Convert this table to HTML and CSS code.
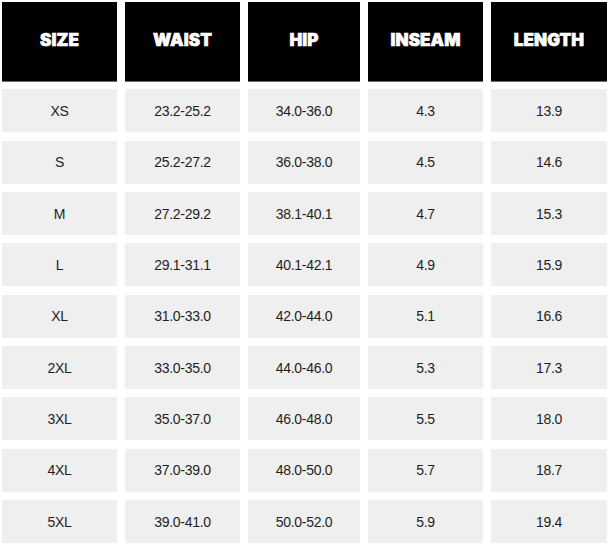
FILE: index.html
```html
<!DOCTYPE html>
<html>
<head>
<meta charset="utf-8">
<link rel="stylesheet" href="styles.css">
</head>
<body>
<div class="chart">
  <div class="head">SIZE</div>
  <div class="head">WAIST</div>
  <div class="head">HIP</div>
  <div class="head">INSEAM</div>
  <div class="head">LENGTH</div>

  <div class="cell">XS</div><div class="cell">23.2-25.2</div><div class="cell">34.0-36.0</div><div class="cell">4.3</div><div class="cell">13.9</div>
  <div class="cell">S</div><div class="cell">25.2-27.2</div><div class="cell">36.0-38.0</div><div class="cell">4.5</div><div class="cell">14.6</div>
  <div class="cell">M</div><div class="cell">27.2-29.2</div><div class="cell">38.1-40.1</div><div class="cell">4.7</div><div class="cell">15.3</div>
  <div class="cell">L</div><div class="cell">29.1-31.1</div><div class="cell">40.1-42.1</div><div class="cell">4.9</div><div class="cell">15.9</div>
  <div class="cell">XL</div><div class="cell">31.0-33.0</div><div class="cell">42.0-44.0</div><div class="cell">5.1</div><div class="cell">16.6</div>
  <div class="cell">2XL</div><div class="cell">33.0-35.0</div><div class="cell">44.0-46.0</div><div class="cell">5.3</div><div class="cell">17.3</div>
  <div class="cell">3XL</div><div class="cell">35.0-37.0</div><div class="cell">46.0-48.0</div><div class="cell">5.5</div><div class="cell">18.0</div>
  <div class="cell">4XL</div><div class="cell">37.0-39.0</div><div class="cell">48.0-50.0</div><div class="cell">5.7</div><div class="cell">18.7</div>
  <div class="cell">5XL</div><div class="cell">39.0-41.0</div><div class="cell">50.0-52.0</div><div class="cell">5.9</div><div class="cell">19.4</div>
</div>
</body>
</html>
```
FILE: styles.css
```css
html, body {
  margin: 0;
  padding: 0;
  background: #ffffff;
}
body {
  padding: 2px 0 0 2px;
}
.chart {
  display: grid;
  grid-template-columns: 115px 115px 112px 115px 116px;
  grid-template-rows: 79px repeat(9, 43px);
  column-gap: 8px;
  row-gap: 8.35px;
}
.chart .head:nth-child(-n+5) {
  margin-bottom: -0.6px;
}
.head {
  background: #000000;
  border-bottom: 1px solid #6a6a6a;
  color: #ffffff;
  font-family: "Inter", "Liberation Sans", sans-serif;
  font-weight: 900;
  font-size: 17px;
  letter-spacing: 0.1px;
  -webkit-text-stroke: 0.6px #ffffff;
  display: flex;
  align-items: center;
  justify-content: center;
  padding-bottom: 3px;
  box-sizing: border-box;
}
.cell {
  background: #efefef;
  color: #1e1e1e;
  font-family: "Liberation Sans", Arial, sans-serif;
  font-size: 14px;
  letter-spacing: -0.3px;
  display: flex;
  align-items: center;
  justify-content: center;
}
```
